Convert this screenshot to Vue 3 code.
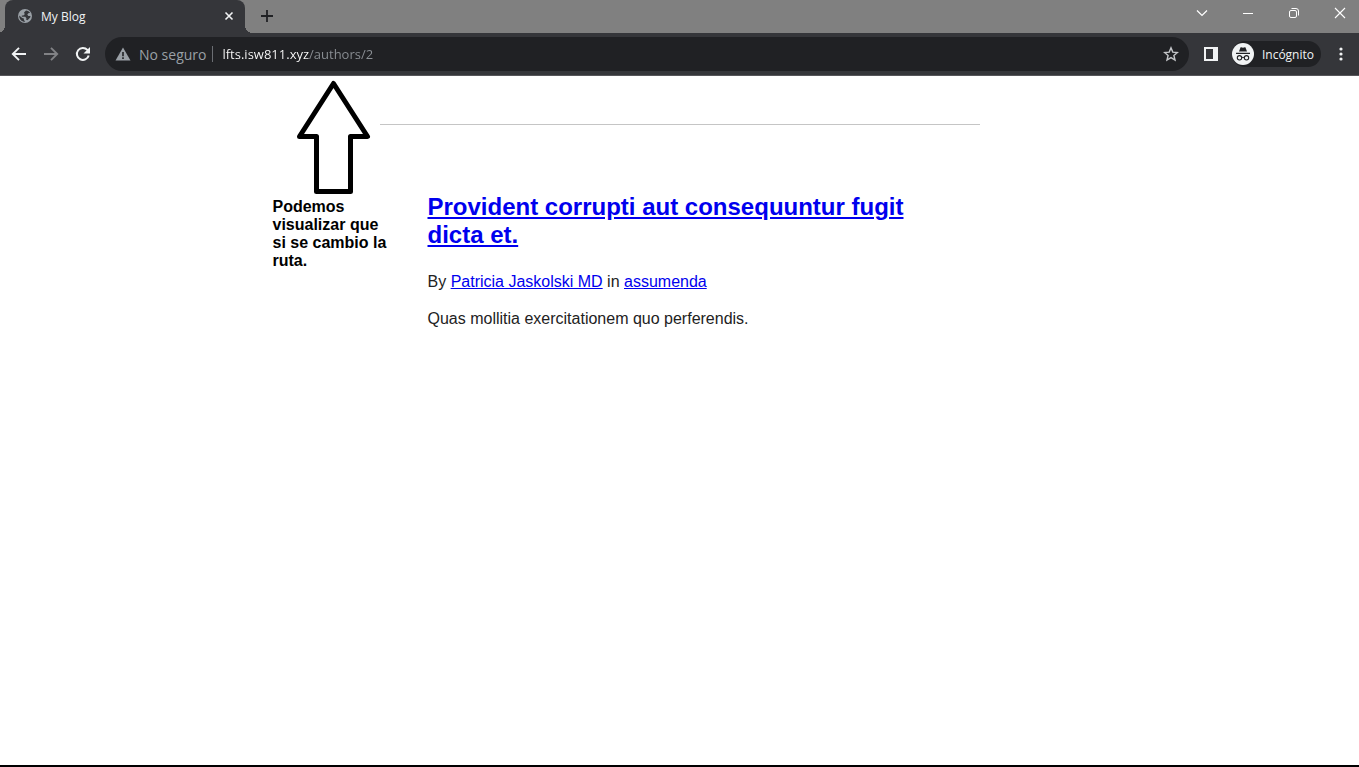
<script setup>
import { ref } from 'vue'

const address = ref('lfts.isw811.xyz/authors/2')
</script>

<template>
  <div class="window">
    <header class="tab-strip">
      <div class="tab">
        <svg class="globe" viewBox="0 0 16 16" width="16" height="16" aria-hidden="true">
          <circle cx="8" cy="8" r="7" fill="#9aa0a6" />
          <path d="M9 2.500 7 4.500l.8 1.700-1.500 1.300H4.800v1.300h3.400l1.300 1.400-.5 1.400 1.500.6 2.700-2.600.3-1.600h-2.200l-1-1.500 1-1.200 1.800-.6C12.400 3.700 10.800 2.600 9 2.500ZM2.200 7.500l3 2.600 1.700.4v1.600l1.400 1.700C4.700 14 2 11.200 2.200 7.500Z" fill="#35363a" />
        </svg>
        <span class="tab-title">My Blog</span>
        <button class="icon-button tab-close" aria-label="Cerrar pestaña">
          <svg viewBox="0 0 16 16" width="16" height="16"><path d="m4.500 4.500 7 7m0-7-7 7" stroke="#f1f3f4" stroke-width="1.600" /></svg>
        </button>
      </div>
      <button class="icon-button new-tab" aria-label="Nueva pestaña">
        <svg viewBox="0 0 16 16" width="16" height="16"><path d="M8 2v12M2 8h12" stroke="#202124" stroke-width="1.800" /></svg>
      </button>
      <div class="window-controls">
        <button class="icon-button control" aria-label="Buscar pestañas">
          <svg viewBox="0 0 12 12" width="12" height="12"><path d="m1 3.500 5 5 5-5" stroke="#fff" stroke-width="1.200" fill="none" /></svg>
        </button>
        <button class="icon-button control" aria-label="Minimizar">
          <svg viewBox="0 0 12 12" width="12" height="12"><path d="M1 6.500h10" stroke="#fff" /></svg>
        </button>
        <button class="icon-button control" aria-label="Restaurar">
          <svg viewBox="0 0 12 12" width="12" height="12" fill="none" stroke="#fff">
            <rect x="1.500" y="3.500" width="7" height="7" rx="1.500" />
            <path d="M3.500 1.500H8A2.500 2.500 0 0 1 10.500 4v4.500" />
          </svg>
        </button>
        <button class="icon-button control" aria-label="Cerrar">
          <svg viewBox="0 0 12 12" width="12" height="12"><path d="m1 1 10 10M11 1 1 11" stroke="#fff" stroke-width="1.100" /></svg>
        </button>
      </div>
    </header>

    <nav class="toolbar" aria-label="Navegación">
      <button class="icon-button nav" aria-label="Atrás">
        <svg viewBox="0 0 16 16" width="16" height="16" fill="none" stroke="#f1f3f4" stroke-width="1.900"><path d="M15 8H2.200M8 1.800 1.800 8 8 14.200" /></svg>
      </button>
      <button class="icon-button nav" aria-label="Adelante">
        <svg viewBox="0 0 16 16" width="16" height="16" fill="none" stroke="#818285" stroke-width="1.900"><path d="M1 8h12.800M8 1.800 14.200 8 8 14.200" /></svg>
      </button>
      <button class="icon-button nav" aria-label="Recargar">
        <svg viewBox="0 0 16 16" width="16" height="16"><path d="M13.700 9.500A6 6 0 1 1 12.400 3.900L14 5.500" fill="none" stroke="#f1f3f4" stroke-width="2" /><path d="M15 1v6.500H8.500Z" fill="#f1f3f4" /></svg>
      </button>

      <div class="omnibox">
        <button class="security">
          <svg viewBox="0 0 16 14" width="16" height="14" aria-hidden="true">
            <path d="M8 .5 15.500 13.500H.5Z" fill="#9aa0a6" />
            <path d="M7.200 5h1.600v4.300H7.200Zm0 5.300h1.600v1.600H7.200Z" fill="#202124" />
          </svg>
          <span>No seguro</span>
        </button>
        <input v-model="address" class="address" type="text" aria-label="Dirección" spellcheck="false" />
        <button class="icon-button" aria-label="Añadir a marcadores">
          <svg viewBox="0 0 16 16" width="16" height="16"><path d="m8 1.900 1.800 4.200 4.600.4-3.500 3 1.100 4.500L8 11.600 4 14l1.100-4.500-3.500-3 4.600-.4Z" fill="none" stroke="#c4c6c9" stroke-width="1.400" /></svg>
        </button>
      </div>

      <button class="icon-button side-panel" aria-label="Panel lateral">
        <svg viewBox="0 0 14 14" width="14" height="14"><path d="M0 0h14v14H0Zm2 2v10h7V2Z" fill="#f1f3f4" fill-rule="evenodd" /></svg>
      </button>
      <button class="profile">
        <svg viewBox="0 0 22 22" width="22" height="22" aria-hidden="true">
          <circle cx="11" cy="11" r="11" fill="#f1f3f4" />
          <path d="M8.500 4.500c.8-.4 1.600.2 2.500.2s1.700-.6 2.500-.2L15 8.600H7ZM4 9.700h14V11H4Z" fill="#202124" />
          <g fill="none" stroke="#202124" stroke-width="1.100">
            <circle cx="7.500" cy="14.800" r="2.200" />
            <circle cx="14.500" cy="14.800" r="2.200" />
            <path d="M9.700 14.600q1.300-.8 2.600 0" />
          </g>
        </svg>
        <span>Incógnito</span>
      </button>
      <button class="icon-button menu" aria-label="Menú">
        <svg viewBox="0 0 4 16" width="4" height="16" fill="#f1f3f4"><circle cx="2" cy="3" r="1.600" /><circle cx="2" cy="8" r="1.600" /><circle cx="2" cy="13" r="1.600" /></svg>
      </button>
    </nav>

    <main class="page">
      <div class="column">
        <article class="post">
          <h2><a href="#post">Provident corrupti aut consequuntur fugit dicta et.</a></h2>
          <p>By <a href="#author">Patricia Jaskolski MD</a> in <a href="#category">assumenda</a></p>
          <p>Quas mollitia exercitationem quo perferendis.</p>
        </article>
        <aside class="note">
          <svg class="arrow" viewBox="0 0 76 116" width="76" height="116" aria-hidden="true">
            <path d="M37.500 4.500 71.500 57.500H54.500V112.500H20.500V57.500H3.500Z" fill="#fff" stroke="#000" stroke-width="5" stroke-linejoin="round" />
          </svg>
          <p>Podemos visualizar que si se cambio la ruta.</p>
        </aside>
      </div>
    </main>
  </div>
</template>

<style>
body {
  margin: 0;
  background: #fff;
}
</style>

<style scoped>
* {
  box-sizing: border-box;
}
.window {
  display: flex;
  flex-direction: column;
  min-height: 100vh;
  border-bottom: 2px solid #000;
  font-family: "Open Sans", "Noto Sans", sans-serif;
}
button {
  padding: 0;
  border: 0;
  background: none;
  font: inherit;
}
.icon-button {
  display: flex;
  align-items: center;
  justify-content: center;
  flex: none;
}
svg {
  display: block;
  flex: none;
}
.tab-strip {
  display: flex;
  height: 33px;
  padding-left: 5px;
  background: #808080;
}
.tab {
  position: relative;
  display: flex;
  align-items: center;
  width: 240px;
  padding: 0 8px 1px 12px;
  border-radius: 8px 8px 0 0;
  background: #35363a;
  color: #f1f3f4;
  font-size: 12px;
}
.tab::before,
.tab::after {
  content: "";
  position: absolute;
  bottom: 0;
  width: 8px;
  height: 8px;
}
.tab::before {
  right: 100%;
  background: radial-gradient(circle at 0 0, transparent 8px, #35363a 8px);
}
.tab::after {
  left: 100%;
  background: radial-gradient(circle at 100% 0, transparent 8px, #35363a 8px);
}
.tab-title {
  flex: 1;
  margin-left: 8px;
}
.new-tab {
  width: 28px;
  margin-left: 8px;
  padding-bottom: 1px;
}
.window-controls {
  display: flex;
  margin-left: auto;
}
.control {
  width: 46px;
  height: 26px;
}
.control:last-child {
  width: 46px;
  margin-right: -4px;
}
.window {
  overflow-x: clip;
}
.toolbar {
  display: flex;
  align-items: center;
  height: 43px;
  padding: 0 8px 0 3px;
  border-bottom: 1px solid #56565a;
  background: #35363a;
}
.nav {
  width: 32px;
  height: 32px;
}
.omnibox {
  display: flex;
  flex: 1;
  align-items: center;
  height: 34px;
  margin-left: 6px;
  padding: 0 10px;
  border-radius: 17px;
  background: #202124;
  font-size: 14px;
}
.security {
  display: flex;
  align-items: center;
  gap: 8px;
  height: 16px;
  padding-right: 6px;
  border-right: 1px solid #6b6e73;
  color: #9aa0a6;
}
.address {
  flex: 1;
  min-width: 0;
  height: 24px;
  padding: 0 0 0 9px;
  border: 0;
  outline: 0;
  background: linear-gradient(90deg, #fff 96px, #8c9196 96px) text;
  color: transparent;
  caret-color: #fff;
  font: inherit;
  font-size: 13px;
}
.side-panel {
  width: 22px;
  height: 28px;
  margin-left: 11px;
}
.profile {
  display: flex;
  align-items: center;
  gap: 8px;
  height: 26px;
  margin-left: 10px;
  padding: 0 7px 0 0;
  border-radius: 13px;
  background: #202124;
  color: #f1f3f4;
  font-size: 12px;
}
.menu {
  width: 20px;
  height: 28px;
  margin-left: 10px;
}
.page {
  flex: 1;
  padding: 48px 16px 0;
  color: #222;
  font: 16px/21px "Liberation Sans", Arial, sans-serif;
}
.column {
  position: relative;
  max-width: 600px;
  margin: 0 auto;
}
.post {
  padding: 68px 48px 48px;
  border-top: 1px solid #c5c5c5;
}
h2 {
  margin: 0 0 22px;
  font-size: 24px;
  line-height: 28px;
}
a {
  color: #0000ee;
}
p {
  margin: 0 0 16px;
}
.note {
  position: absolute;
  top: -45px;
  left: -107px;
  width: 120px;
  color: #000;
  font-weight: bold;
  line-height: 18px;
}
.arrow {
  margin-left: 23px;
}
.note p {
  margin: 3px 0 0;
}
</style>
